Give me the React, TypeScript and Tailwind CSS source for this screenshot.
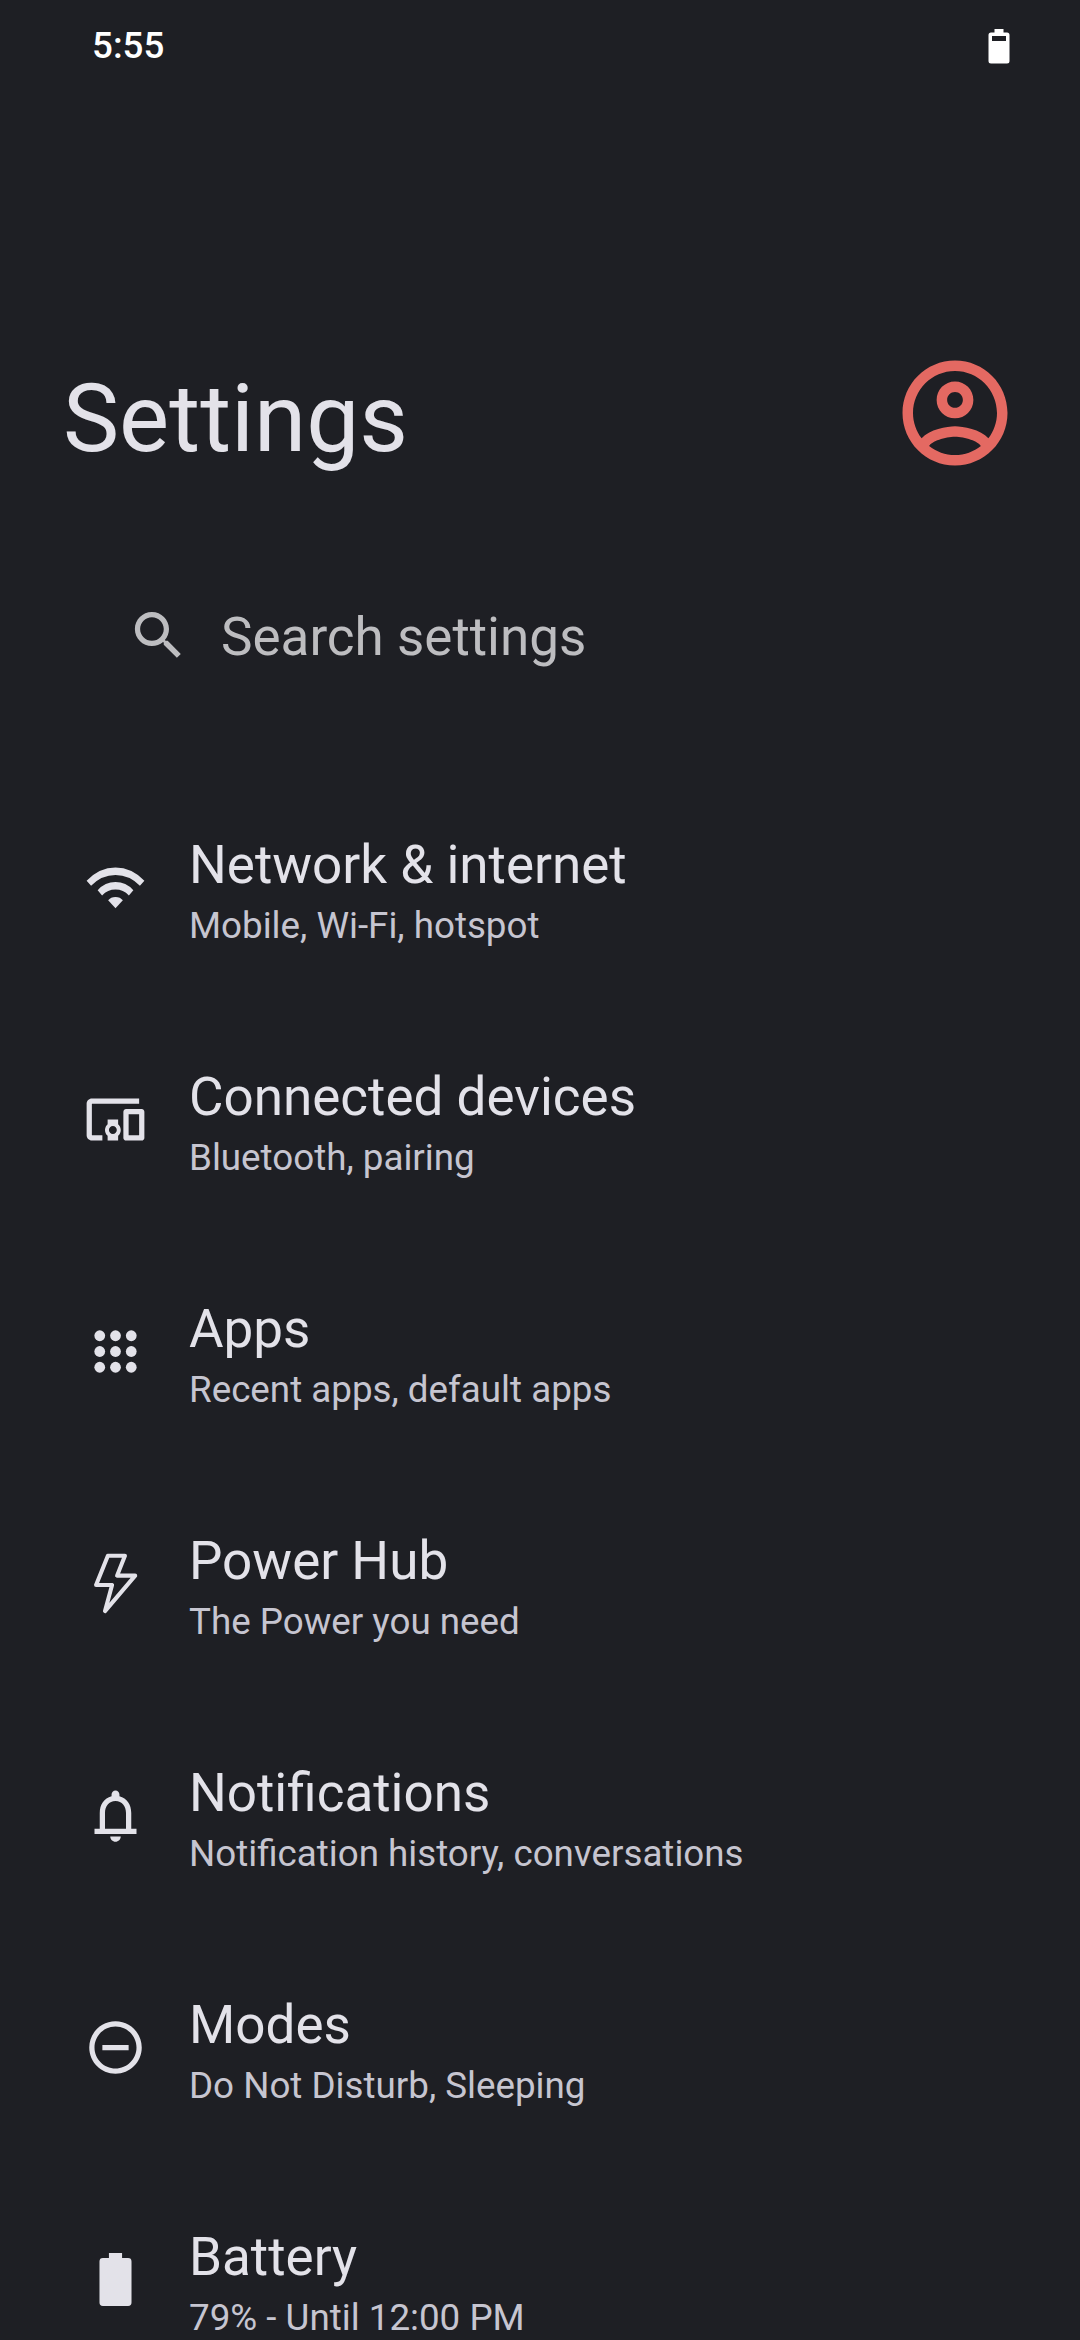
import type { ReactNode } from 'react';

interface SettingsItem {
  title: string;
  summary: string;
  icon: ReactNode;
}

const items: SettingsItem[] = [
  {
    title: 'Network & internet',
    summary: 'Mobile, Wi-Fi, hotspot',
    icon: (
      <>
        <path d="M1 9.4Q5.8 4.35 12 4.35T23 9.4L21.3 11.3Q17.3 7.2 12 7.2T2.7 11.3Z" />
        <path d="M5.2 13Q8 9.9 12 9.9T18.8 13L17.1 15Q15 12.8 12 12.8T6.9 15Z" />
        <path d="M9.2 16.9Q10.2 15.6 12 15.6T14.8 16.9L12 19.9Z" />
      </>
    ),
  },
  {
    title: 'Connected devices',
    summary: 'Bluetooth, pairing',
    icon: (
      <path d="M3 6h18V4H3c-1.1 0-2 .9-2 2v12c0 1.1.9 2 2 2h4v-2H3V6zm10 6H9v1.78c-.61.55-1 1.33-1 2.22s.39 1.67 1 2.22V20h4v-1.78c.61-.55 1-1.34 1-2.22s-.39-1.67-1-2.22V12zm-2 5.5c-.83 0-1.5-.67-1.5-1.5s.67-1.5 1.5-1.5 1.5.67 1.5 1.5-.67 1.5-1.5 1.5zM22 8h-6c-.5 0-1 .5-1 1v10c0 .5.5 1 1 1h6c.5 0 1-.5 1-1V9c0-.5-.5-1-1-1zm-1 10h-4v-8h4v8z" />
    ),
  },
  {
    title: 'Apps',
    summary: 'Recent apps, default apps',
    icon: [6, 12, 18].map((cy) => [6, 12, 18].map((cx) => <circle key={`${cx}-${cy}`} cx={cx} cy={cy} r="2.05" />)),
  },
  {
    title: 'Power Hub',
    summary: 'The Power you need',
    icon: (
      <path
        d="M9.1 1.4H15.6L12.6 9H19.5L8 22.5L10.7 12.6H4.6Z"
        fill="none"
        stroke="currentColor"
        strokeWidth="1.55"
        strokeLinejoin="round"
      />
    ),
  },
  {
    title: 'Notifications',
    summary: 'Notification history, conversations',
    icon: (
      <path d="M18 17v-6c0-3.07-1.63-5.64-4.5-6.32V4c0-.83-.67-1.5-1.5-1.5s-1.5.67-1.5 1.5v.68C7.64 5.36 6 7.92 6 11v6H4v2h16v-2h-2zm-2 0H8v-6c0-2.48 1.51-4.5 4-4.5s4 2.02 4 4.5v6zM12 22c1.1 0 2-.9 2-2h-4c0 1.1.9 2 2 2z" />
    ),
  },
  {
    title: 'Modes',
    summary: 'Do Not Disturb, Sleeping',
    icon: (
      <path d="M7 11v2h10v-2H7zm5-9C6.48 2 2 6.48 2 12s4.48 10 10 10 10-4.48 10-10S17.52 2 12 2zm0 18c-4.41 0-8-3.59-8-8s3.59-8 8-8 8 3.59 8 8-3.59 8-8 8z" />
    ),
  },
  {
    title: 'Battery',
    summary: '79% - Until 12:00 PM',
    icon: <path d="M9.5 1.9h5v1.9h2.3q1.3 0 1.3 1.3v15.7q0 1.3-1.3 1.3H7.2q-1.3 0-1.3-1.3V5.1q0-1.3 1.3-1.3h2.3z" />,
  },
];

function StatusBar() {
  return (
    <div className="flex h-[92px] shrink-0 items-center justify-between pl-[92px] pr-[70px] text-white">
      <span className="pb-0.5 text-[36.75px] leading-[43px] font-medium">5:55</span>
      <svg width="22" height="35" viewBox="0 0 22 35" fill="currentColor">
        <path
          fillRule="evenodd"
          d="M6.5 0h9v3.5H19q2.5 0 2.5 2.5v26q0 2.5-2.5 2.5H3Q.5 34.5.5 32V6Q.5 3.5 3 3.5h3.5zM4 7v5h14V7z"
        />
      </svg>
    </div>
  );
}

function SettingsRow({ title, summary, icon }: SettingsItem) {
  return (
    <li className="flex h-[232px] shrink-0 items-center pl-[84px]">
      <svg className="size-[63px] shrink-0 text-[#e3e2e9]" viewBox="0 0 24 24" fill="currentColor">
        {icon}
      </svg>
      <div className="ml-[42px] pt-4 whitespace-nowrap">
        <h2 className="text-[53px] leading-[62px] text-[#e3e2e9]">{title}</h2>
        <p className="text-[36.75px] leading-[60px] text-[#c6c5d0]">{summary}</p>
      </div>
    </li>
  );
}

export default function App() {
  return (
    <main className="flex h-[2340px] w-[1080px] flex-col overflow-hidden bg-[#1e1f24] font-['Roboto',sans-serif]">
      <StatusBar />

      <header className="mt-[258px] flex h-[126px] shrink-0 items-center justify-between pr-[62px] pl-[63px]">
        <h1 className="pt-[10px] text-[94.5px] leading-[111px] text-[#e3e2e9]">Settings</h1>
        <svg className="size-[126px] text-[#e46962]" viewBox="0 0 24 24" fill="currentColor">
          <path d="M12 2C6.48 2 2 6.48 2 12s4.48 10 10 10 10-4.48 10-10S17.52 2 12 2zM7.07 18.28c.43-.9 3.05-1.78 4.93-1.78s4.51.88 4.93 1.78C15.57 19.36 13.86 20 12 20s-3.57-.64-4.93-1.72zM18.36 16.83c-1.43-1.74-4.9-2.33-6.36-2.33s-4.93.59-6.36 2.33C4.62 15.49 4 13.82 4 12c0-4.41 3.59-8 8-8s8 3.59 8 8c0 1.82-.62 3.49-1.64 4.83zM12 6c-1.94 0-3.5 1.56-3.5 3.5S10.06 13 12 13s3.5-1.56 3.5-3.5S13.94 6 12 6zm0 5c-.83 0-1.5-.67-1.5-1.5S11.17 8 12 8s1.5.67 1.5 1.5S12.83 11 12 11z" />
        </svg>
      </header>

      <div className="mt-[86px] flex h-[146px] shrink-0 items-center gap-[31px] pl-[127px] text-[#bdbdc0]">
        <svg className="size-[63px]" viewBox="0 0 24 24" fill="currentColor">
          <path d="M15.5 14h-.79l-.28-.27C15.41 12.59 16 11.11 16 9.5 16 5.91 13.09 3 9.5 3S3 5.91 3 9.5 5.91 16 9.5 16c1.61 0 3.09-.59 4.23-1.57l.27.28v.79l5 4.99L20.49 19l-4.99-5zm-6 0C7.01 14 5 11.99 5 9.5S7.01 5 9.5 5 14 7.01 14 9.5 11.99 14 9.5 14z" />
        </svg>
        <span className="pt-1 text-[53px] leading-[62px]">Search settings</span>
      </div>

      <ul className="mt-[63px] flex shrink-0 flex-col">
        {items.map((item) => (
          <SettingsRow key={item.title} {...item} />
        ))}
      </ul>
    </main>
  );
}
